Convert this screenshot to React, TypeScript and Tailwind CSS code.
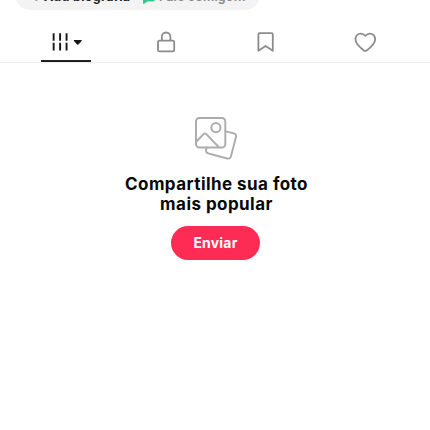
import React from "react";

function Pill() {
  return (
    <div className="-mt-[20px] ml-[15px] flex h-[30px] w-[245px] items-center rounded-full bg-[#f3f3f3] pt-[4px] font-['Inter','Noto_Sans',sans-serif] text-[12.5px] leading-[18px]">
      <span className="ml-[17px] w-[12px] font-bold text-[#222]">+</span>
      <span className="w-[98px] whitespace-nowrap font-bold tracking-[0.3px] text-[#222]">Add biografia</span>
      <svg className="h-[14px] w-[14px]" viewBox="0 0 14 14" fill="#38c793">
        <path d="M3 0h8a2 2 0 0 1 2 2v7.400a2 2 0 0 1-2 2H5.500l-3.300 2.400a.8.800 0 0 1-1.200-.7V2a2 2 0 0 1 2-2Z" />
      </svg>
      <span className="ml-[3px] whitespace-nowrap font-semibold tracking-[0.15px] text-[#888]">Fale comigo...</span>
    </div>
  );
}

function Tabs() {
  return (
    <nav className="flex h-[53px] border-b border-[#ededed] pl-[16px] text-[#8c8c8c]">
      <div className="flex w-[100px] flex-col items-center">
        <svg className="mt-[22px] h-[20px] w-[34px]" viewBox="0 0 34 20" fill="#171717">
          <path d="M3 1.200h2v8h-2zM9.800 1.200h2v8h-2zM16.600 1.200h2v8h-2zM3 11.400h2v8h-2zM9.800 11.400h2v8h-2zM16.600 11.400h2v8h-2z" />
          <path d="M25.800 8.500h7.200c.6 0 .8.600.4 1l-3.300 3.600a1 1 0 0 1-1.400 0L25.400 9.500c-.4-.4-.2-1 .4-1Z" />
        </svg>
        <div className="mt-[9px] h-[2px] w-[50px] shrink-0 bg-[#202020]" />
      </div>
      <div className="flex w-[100px] justify-center">
        <svg className="mt-[20px] h-[24px] w-[24px]" viewBox="0 0 24 24" fill="none" stroke="currentColor" strokeWidth="1.800">
          <rect x="4" y="10.600" width="16.200" height="10.800" rx="1.600" />
          <path d="M7.800 10.500V6.800a4.300 4.300 0 0 1 8.600 0v3.700" />
        </svg>
      </div>
      <div className="flex w-[100px] justify-center">
        <svg className="mt-[20px] h-[24px] w-[24px]" viewBox="0 0 24 24" fill="none" stroke="currentColor" strokeWidth="1.800" strokeLinejoin="round">
          <path d="M5.600 3.200h12a1.200 1.200 0 0 1 1.200 1.200V20.800l-7.200-4.900L4.400 20.800V4.400A1.200 1.200 0 0 1 5.600 3.200Z" />
        </svg>
      </div>
      <div className="flex w-[100px] justify-center">
        <svg className="mt-[20px] h-[24px] w-[24px]" viewBox="0 0 24 24" fill="none" stroke="currentColor" strokeWidth="1.800" strokeLinejoin="round">
          <path d="M11.300 5.900C9.800 4.100 8.500 3.600 6.700 3.600 3.700 3.600 1.500 5.900 1.500 9.200c0 4.800 5.100 8.700 8.500 11.200.9.600 1.700.6 2.600 0 3.500-2.500 8.500-6.400 8.500-11.200 0-3.300-2.300-5.600-5.200-5.600-1.800 0-3.100.5-4.600 2.300Z" />
        </svg>
      </div>
    </nav>
  );
}

export default function App() {
  return (
    <main className="h-[430px] w-[430px] overflow-hidden bg-white">
      <div className="flow-root">
        <Pill />
        <Tabs />
      </div>
      <section className="flex flex-col items-center pt-[52px] font-['Inter','Noto_Sans',sans-serif]">
        <svg className="ml-[2px] h-[48px] w-[48px]" viewBox="0 0 48 48" fill="none" stroke="#ababab" strokeWidth="1.900" strokeLinejoin="round" strokeLinecap="round">
          <rect x="4" y="3" width="29.300" height="29.500" rx="3.500" />
          <circle cx="23.900" cy="12.600" r="4.600" />
          <path d="m4.500 26.500 7-7.400a2 2 0 0 1 2.800 0L26.600 32" />
          <path d="M33.700 16.300l8.200 2.100a3 3 0 0 1 2.100 3.700l-5.100 19.300a3 3 0 0 1-3.700 2.100L16.200 38.400a3 3 0 0 1-2.100-3.700l.6-2.200" />
        </svg>
        <h1 className="mt-[11px] ml-[3px] flex flex-col items-center text-[17px] leading-[20px] font-bold tracking-[0.45px] text-[#080808]">
          <span className="whitespace-nowrap">Compartilhe sua foto</span>
          <span className="whitespace-nowrap">mais popular</span>
        </h1>
        <button className="mt-[12px] ml-[1px] flex h-[34px] w-[89px] items-center justify-center rounded-full bg-[#fe2c55] pb-[1px] text-[14px] font-bold tracking-[0.2px] text-white">Enviar</button>
      </section>
    </main>
  );
}
